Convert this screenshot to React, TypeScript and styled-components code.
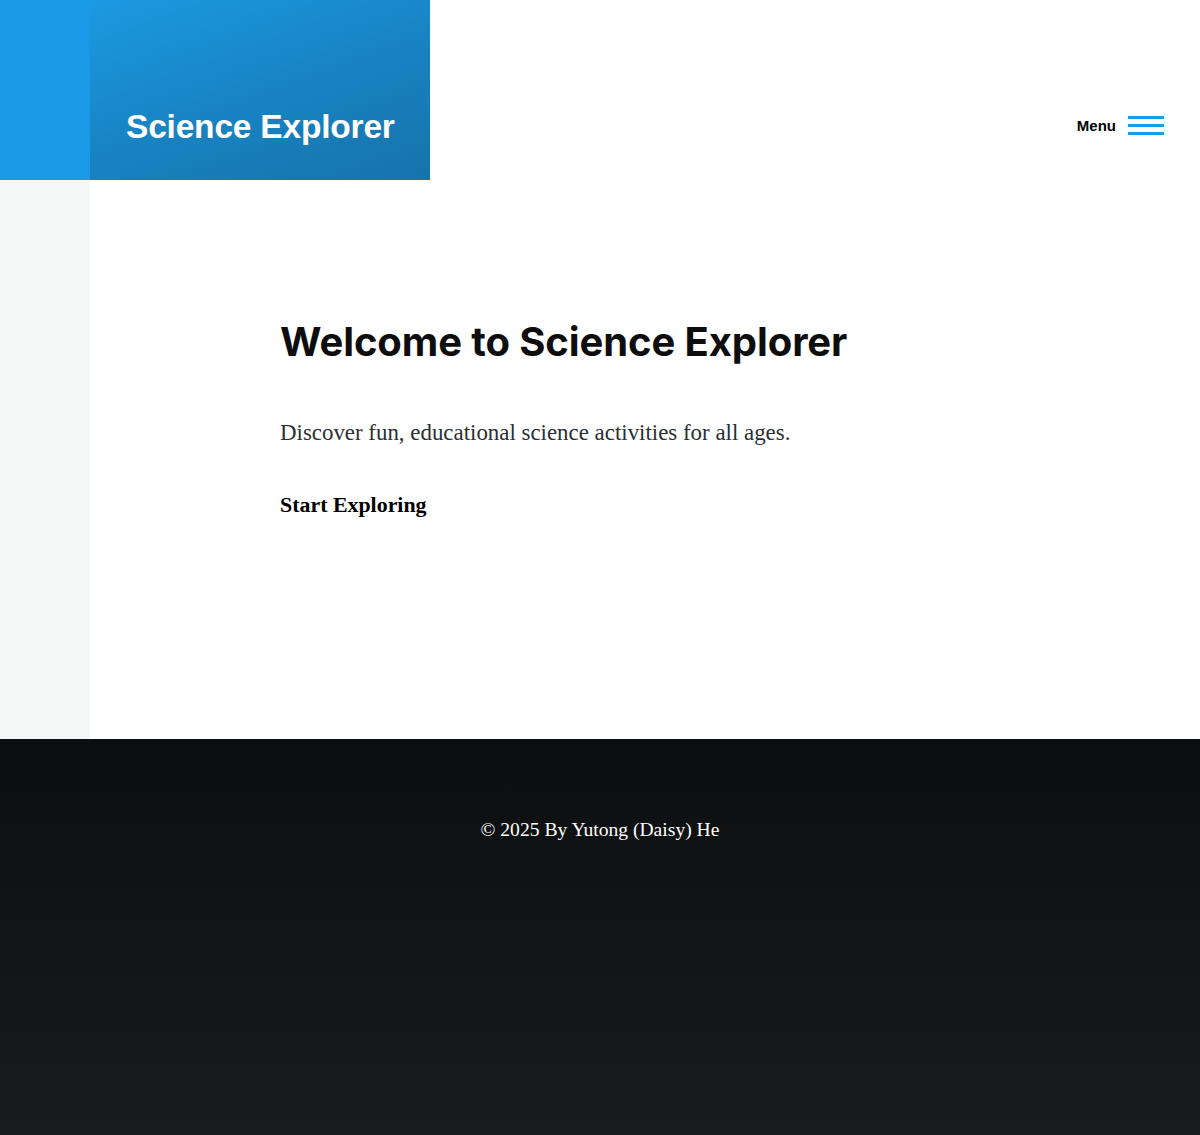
import React from "react";
import styled, { createGlobalStyle } from "styled-components";

const Global = createGlobalStyle`
  html, body { margin: 0; padding: 0; background: #ffffff; }
  body { font-family: "Liberation Serif", serif; }
  * { box-sizing: border-box; }
`;

const Page = styled.div`
  display: flex;
  flex-direction: column;
  min-height: 1135px;
`;

const Header = styled.header`
  display: flex;
  height: 180px;
  background: #ffffff;
`;

const SideStrip = styled.div<{ $tone: "blue" | "grey" }>`
  width: 90px;
  flex: 0 0 90px;
  background: ${(p) => (p.$tone === "blue" ? "#1a9ae6" : "#f5f7f6")};
`;

const Brand = styled.div`
  width: 340px;
  flex: 0 0 340px;
  background: linear-gradient(160deg, #1b9ae2 0%, #1884c4 50%, #1673ab 100%);
  display: flex;
  align-items: flex-end;
  padding: 0 0 37px 36px;
`;

const BrandTitle = styled.h1`
  margin: 0;
  color: #ffffff;
  font-family: "Liberation Sans", Arial, sans-serif;
  font-weight: 700;
  font-size: 33.5px;
  letter-spacing: -0.2px;
  line-height: 1;
`;

const NavArea = styled.div`
  flex: 1;
  display: flex;
  justify-content: flex-end;
  align-items: center;
  padding-right: 36px;
  padding-top: 100px;
  padding-bottom: 30px;
`;

const MenuButton = styled.button`
  display: flex;
  align-items: center;
  gap: 12px;
  background: none;
  border: 0;
  padding: 0;
  cursor: pointer;
  font-family: "Liberation Sans", Arial, sans-serif;
  font-weight: 700;
  font-size: 15px;
  color: #000000;
`;

const Burger = styled.span`
  display: flex;
  flex-direction: column;
  gap: 5px;
  width: 36px;
`;

const BurgerLine = styled.span`
  display: block;
  height: 3px;
  width: 36px;
  background: #1a9be6;
`;

const Body = styled.div`
  display: flex;
  flex: 0 0 559px;
`;

const Main = styled.main`
  flex: 1;
  padding: 138px 0 0 190px;
`;

const Heading = styled.h2`
  margin: 0;
  font-family: Inter, "Open Sans", sans-serif;
  font-weight: 700;
  font-size: 40px;
  letter-spacing: -0.1px;
  color: #0d0d0d;
  line-height: 48px;
`;

const Lead = styled.p`
  margin: 52px 0 0;
  font-family: "Liberation Serif", "Times New Roman", serif;
  font-size: 22.9px;
  color: #2b2f33;
  line-height: 30px;
`;

const CTA = styled.a`
  display: inline-block;
  margin-top: 42px;
  font-family: "Liberation Serif", "Times New Roman", serif;
  font-weight: 700;
  font-size: 21.9px;
  color: #000000;
  text-decoration: none;
  line-height: 30px;
`;

const Footer = styled.footer`
  flex: 1;
  background: linear-gradient(180deg, #0c0e10 0%, #181c1e 100%);
  display: flex;
  justify-content: center;
  padding-top: 78px;
`;

const FooterText = styled.p`
  margin: 0;
  color: #ffffff;
  font-family: "Liberation Serif", "Times New Roman", serif;
  font-size: 19.6px;
  line-height: 26px;
`;

export default function App() {
  return (
    <Page>
      <Global />
      <Header>
        <SideStrip $tone="blue" />
        <Brand>
          <BrandTitle>Science Explorer</BrandTitle>
        </Brand>
        <NavArea>
          <MenuButton>
            Menu
            <Burger>
              <BurgerLine />
              <BurgerLine />
              <BurgerLine />
            </Burger>
          </MenuButton>
        </NavArea>
      </Header>
      <Body>
        <SideStrip $tone="grey" />
        <Main>
          <Heading>Welcome to Science Explorer</Heading>
          <Lead>Discover fun, educational science activities for all ages.</Lead>
          <CTA href="#">Start Exploring</CTA>
        </Main>
      </Body>
      <Footer>
        <FooterText>© 2025 By Yutong (Daisy) He</FooterText>
      </Footer>
    </Page>
  );
}
